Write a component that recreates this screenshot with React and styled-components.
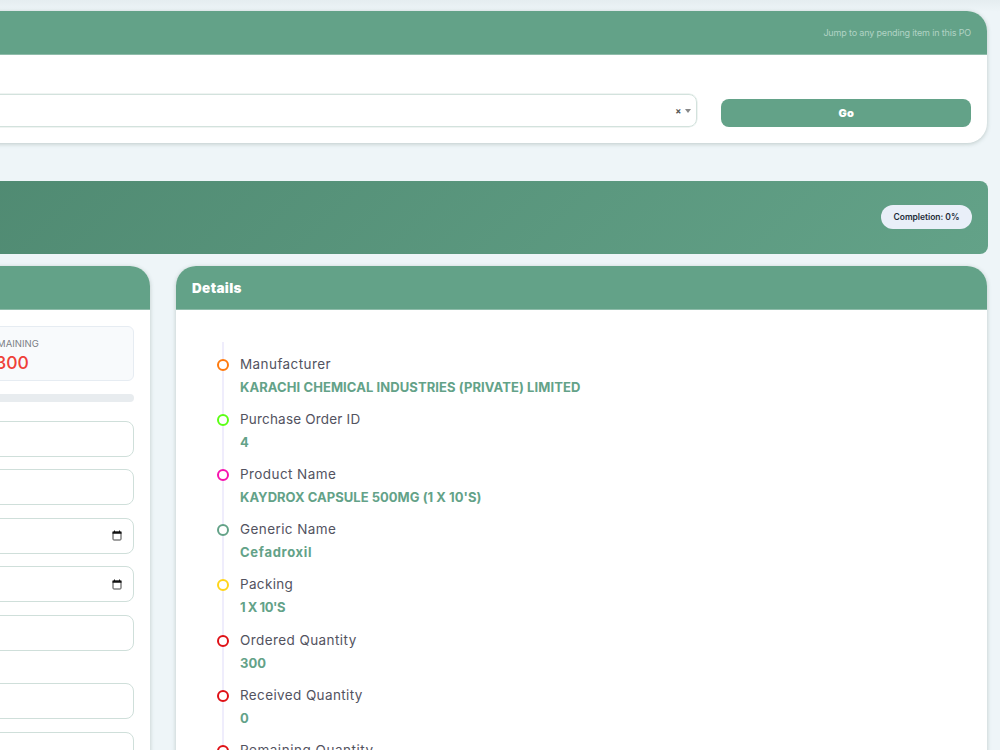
import React from 'react';
import styled, { createGlobalStyle } from 'styled-components';

const GlobalStyle = createGlobalStyle`
    * {
        box-sizing: border-box;
    }
    body {
        margin: 0;
        height: 750px;
        overflow: hidden;
        background: #eef5f8;
        font-family: Inter, 'Open Sans', sans-serif;
    }
`;

const Page = styled.div`
    width: 1000px;
    height: 750px;
    overflow: hidden;
    background: linear-gradient(#e5edf0, #eef5f8 12px);
`;

// the content column starts left of the visible area
const Content = styled.main`
    margin-left: -126px;
    width: 1114px;
    padding-top: 11px;
    display: flex;
    flex-direction: column;
`;

const Card = styled.section`
    background: #fff;
    border-radius: 20px;
    overflow: hidden;
    width: ${(p) => p.$width};
    height: ${(p) => p.$height};
    box-shadow: 0 1px 4px rgba(60, 90, 80, 0.28);
`;

const CardHeader = styled.header`
    height: 44px;
    padding: 0 16px;
    display: flex;
    align-items: center;
    justify-content: ${(p) => p.$justify || 'flex-start'};
    background: #63a288;
    color: #fff;
    border-bottom: 1px solid #8fbcaa;
`;

const HeaderHint = styled.span`
    font-size: 9px;
    letter-spacing: -0.16px;
    color: #b1d3c5;
`;

const HeaderTitle = styled.h2`
    margin: 0;
    font-size: 13.5px;
    font-weight: 900;
    letter-spacing: 0.35px;
`;

const JumpBody = styled.div`
    height: 88px;
    padding: 0 16px 16px;
    display: flex;
    align-items: flex-end;
    gap: 24px;
`;

const SelectBox = styled.div`
    flex: 1;
    height: 33px;
    border: 1px solid #d3e2dd;
    box-shadow: 0 0 0 0.5px #dfeae6;
    border-radius: 8px;
    padding-right: 5px;
    display: flex;
    align-items: center;
    justify-content: flex-end;
    gap: 4px;
    color: #555;
    font-size: 9px;
    font-weight: 700;
`;

const Caret = styled.span`
    border: 3px solid transparent;
    border-top: 4px solid #888;
    border-bottom: 0;
`;

const GoButton = styled.button`
    width: 249.6px;
    height: 28px;
    border: 0;
    border-radius: 8px;
    background: #63a288;
    color: #fff;
    font: 900 11px Inter, sans-serif;
`;

const Banner = styled.div`
    height: 72.5px;
    margin: 38px 0 12.5px;
    padding: 0 16px 1px 0;
    border-radius: 8px;
    display: flex;
    align-items: center;
    justify-content: flex-end;
    background: linear-gradient(135deg, #4e8870 0%, #63a288 100%);
`;

const Pill = styled.span`
    width: 91px;
    height: 24px;
    border-radius: 12px;
    display: flex;
    align-items: center;
    justify-content: center;
    background: #e9eff8;
    color: #232c38;
    font-size: 8.5px;
    font-weight: 600;
    letter-spacing: -0.03px;
`;

const Columns = styled.div`
    display: flex;
    gap: 26px;
`;

const FormBody = styled.div`
    padding: 16px 16px 0;
`;

const Stat = styled.div`
    height: 55px;
    border: 1px solid #e6ecf2;
    border-radius: 6px;
    background: #f8fafc;
    padding-top: 10px;
    text-align: center;
`;

const StatLabel = styled.div`
    font-size: 9.5px;
    line-height: 13px;
    color: #7b8086;
`;

const StatValue = styled.div`
    margin-top: 2px;
    font-size: 17.5px;
    line-height: 22px;
    font-weight: 500;
    color: #ef4038;
`;

const Progress = styled.div`
    height: 8px;
    margin: 13px 0 18.6px;
    border-radius: 4px;
    background: #e8ecef;
`;

const Field = styled.div`
    height: 36px;
    margin-bottom: ${(p) => p.$gap || '12.5px'};
    padding-right: 11px;
    border: 1px solid #cfdfda;
    border-radius: 8px;
    display: flex;
    align-items: center;
    justify-content: flex-end;
`;

const Timeline = styled.ul`
    list-style: none;
    margin: 32px 0 0 46px;
    padding: 11.6px 0 0 18px;
    border-left: 2px solid #efedfc;
`;

const Entry = styled.li`
    position: relative;
    height: 55.2px;
`;

const Ring = styled.span`
    position: absolute;
    left: -25px;
    top: 5px;
    width: 12px;
    height: 12px;
    border: 2px solid ${(p) => p.$color};
    border-radius: 50%;
    background: #fff;
`;

const Label = styled.div`
    width: max-content;
    margin-left: -2px;
    font-size: 13.5px;
    line-height: 21px;
    letter-spacing: ${(p) => p.$track || 0}px;
    color: #53535f;
`;

const Value = styled(Label)`
    margin-top: 2px;
    font-size: 13px;
    font-weight: 700;
    color: #63a288;
`;

const details = [
    { label: 'Manufacturer', value: 'KARACHI CHEMICAL INDUSTRIES (PRIVATE) LIMITED', color: '#ff7b0f', track: [0.42, 0.08] },
    { label: 'Purchase Order ID', value: '4', color: '#5cff16', track: [0.19, 0] },
    { label: 'Product Name', value: "KAYDROX CAPSULE 500MG (1 X 10'S)", color: '#f713ae', track: [0.42, 0.03] },
    { label: 'Generic Name', value: 'Cefadroxil', color: '#63a288', track: [0.42, 0.7] },
    { label: 'Packing', value: "1 X 10'S", color: '#ffd51a', track: [0.33, -0.45] },
    { label: 'Ordered Quantity', value: '300', color: '#df1117', track: [0.42, 0] },
    { label: 'Received Quantity', value: '0', color: '#df1117', track: [0.38, 0] },
    { label: 'Remaining Quantity', value: '300', color: '#df1117', track: [0.52, 0] },
];

function CalendarIcon() {
    return (
        <svg width="10" height="11" viewBox="0 0 10 11">
            <rect x="1" y="2" width="8" height="8" rx=".8" fill="none" stroke="#444" />
            <path d="M.5 1.5h9v2.3h-9zM2 .5h1v1H2zM7 .5h1v1H7z" fill="#111" />
        </svg>
    );
}

export default function App() {
    return (
        <Page>
            <GlobalStyle />
            <Content>
                <Card $width="1113px" $height="132px">
                    <CardHeader $justify="flex-end">
                        <HeaderHint>Jump to any pending item in this PO</HeaderHint>
                    </CardHeader>
                    <JumpBody>
                        <SelectBox>
                            <span>×</span>
                            <Caret />
                        </SelectBox>
                        <GoButton>Go</GoButton>
                    </JumpBody>
                </Card>
                <Banner>
                    <Pill>Completion: 0%</Pill>
                </Banner>
                <Columns>
                    <Card $width="276px" $height="520px">
                        <CardHeader />
                        <FormBody>
                            <Stat>
                                <StatLabel>REMAINING</StatLabel>
                                <StatValue>300</StatValue>
                            </Stat>
                            <Progress />
                            <Field />
                            <Field />
                            <Field><CalendarIcon /></Field>
                            <Field><CalendarIcon /></Field>
                            <Field $gap="32.6px" />
                            <Field />
                            <Field />
                        </FormBody>
                    </Card>
                    <Card $width="811px" $height="520px">
                        <CardHeader>
                            <HeaderTitle>Details</HeaderTitle>
                        </CardHeader>
                        <Timeline>
                            {details.map((item) => (
                                <Entry key={item.label}>
                                    <Ring $color={item.color} />
                                    <Label $track={item.track[0]}>{item.label}</Label>
                                    <Value $track={item.track[1]}>{item.value}</Value>
                                </Entry>
                            ))}
                        </Timeline>
                    </Card>
                </Columns>
            </Content>
        </Page>
    );
}
